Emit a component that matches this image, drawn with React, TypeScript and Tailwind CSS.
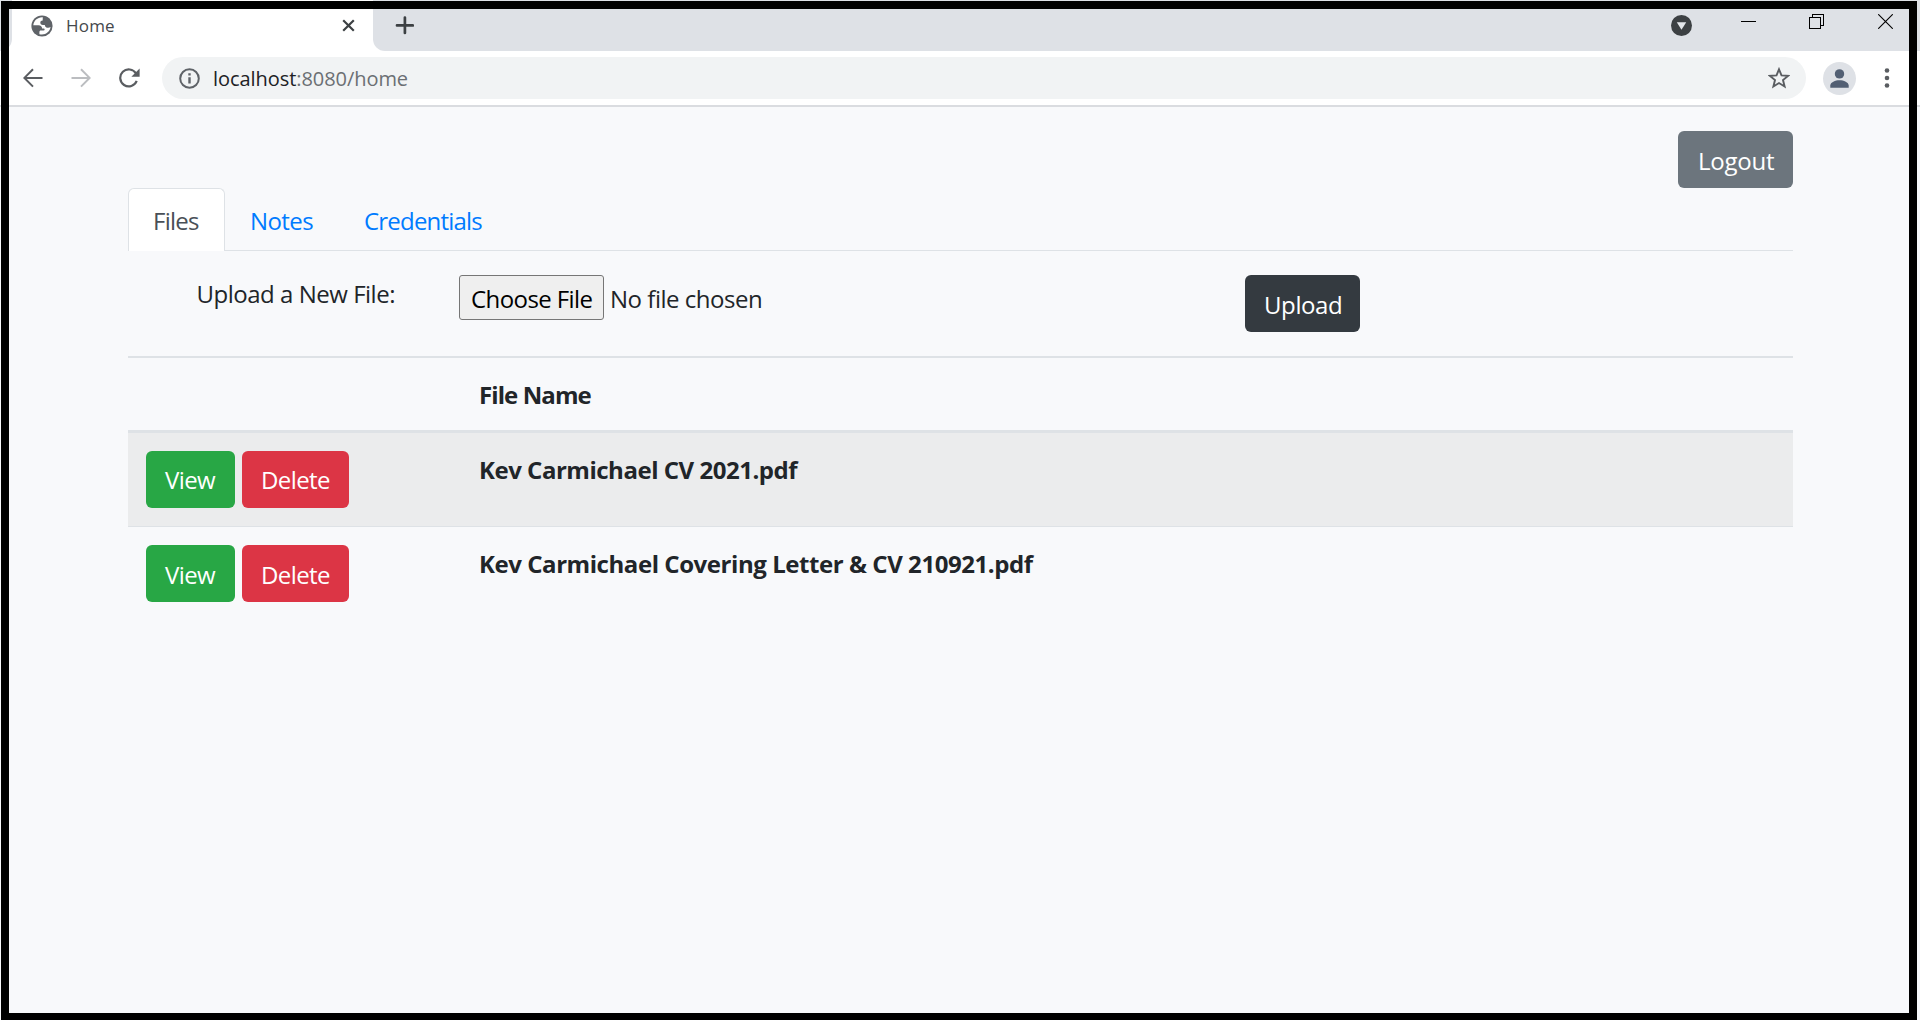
const files = [
  { name: "Kev Carmichael CV 2021.pdf", spacing: "tracking-[-0.48px]", row: "h-[94px] border-b border-[#dee2e6] bg-[#ebeced] pt-[18px]", label: "pt-px" },
  { name: "Kev Carmichael Covering Letter & CV 210921.pdf", spacing: "tracking-[-0.44px]", row: "h-[93px] pt-[18px]", label: "pt-[3px]" },
];

function TabStrip() {
  return (
    <div className="flex h-[51px] bg-[#dee1e6]">
      <div className="flex w-3 bg-white">
        <div className="w-full rounded-br-[12px] bg-[#dee1e6]" />
      </div>
      <div className="flex w-[361px] bg-white pt-[15px]">
        <svg className="ml-[19px] h-[22px] w-[22px]" viewBox="0 0 22 22">
          <circle cx="11" cy="11" r="10.6" fill="#5f6368" />
          <path d="M11.800 2.300C6.800 1.900 2.700 5.700 2.300 10.300h5.200c2.300 0 3.600 1.300 3.600 3.200h1.600c1.300 0 1.300 2-.1 2.100H9.800c-.900 0-1.400.700-1.400 1.400v2.200c5.500 1.500 10.400-2 11.200-7.100-.700.500-1.500.700-2.500.700-1.900 0-3.200-1.200-3.300-2.900h-1.900c-1.700 0-2.600-1-2.600-2.200 0-1.300 1-2.200 2.400-2.200z" fill="#fff" />
        </svg>
        <span className="ml-[13px] -mt-[3px] w-[265px] text-[17px] leading-[28px] tracking-[0.2px] text-[#45484c]">Home</span>
        <svg className="mt-[4px] ml-[11px] -mr-2 h-[13px] w-[13px] shrink-0" viewBox="0 0 13 13">
          <path d="M1.200 1.200l10.600 10.600M11.800 1.200L1.200 11.800" stroke="#3c4043" strokeWidth="2.200" fill="none" />
        </svg>
      </div>
      <div className="flex flex-1 bg-white">
        <div className="flex flex-1 rounded-bl-[12px] bg-[#dee1e6]">
          <svg className="ml-[22px] mt-[16px] h-[19px] w-[19px]" viewBox="0 0 19 19">
            <path d="M9.900 1.500v15.500M2 9.400h15.800" stroke="#3c4043" strokeWidth="2.700" strokeLinecap="round" />
          </svg>
          <div className="flex-1" />
          <svg className="mt-[15px] h-[21px] w-[21px]" viewBox="0 0 21 21">
            <circle cx="10.500" cy="10.500" r="10.500" fill="#3c4043" />
            <path d="M5.800 7.200h9.400l-4.700 7.600z" fill="#e3e6ea" />
          </svg>
          <div className="ml-[49px] mt-[21px] h-px w-[15px] bg-black" />
          <svg className="ml-[53px] mt-[14px] h-[15px] w-[15px]" viewBox="0 0 15 15" shapeRendering="crispEdges">
            <path d="M.5 3.500h11v11H.5zM3.500 3.500v-3h11v11h-3" stroke="#000" fill="none" />
          </svg>
          <svg className="ml-[54px] mr-[27px] mt-[14px] h-[15px] w-[15px]" viewBox="0 0 15 15">
            <path d="M.200.200l14.600 14.600M14.800.200L.200 14.800" stroke="#000" strokeWidth="1.100" />
          </svg>
        </div>
      </div>
    </div>
  );
}

function Toolbar() {
  return (
    <div className="flex h-[56px] items-start border-b-2 border-[#dadce0] bg-white pt-[6px]">
      <svg className="ml-[23px] mt-[11px] h-[20px] w-[20px]" viewBox="0 0 20 20">
        <path d="M19.500 9.900H1.700M10 1.200L1.400 9.900l8.600 8.700" stroke="#5a5d61" strokeWidth="2" fill="none" />
      </svg>
      <svg className="ml-[28px] mt-[11px] h-[20px] w-[20px]" viewBox="0 0 20 20">
        <path d="M.500 9.900h17.800M10 1.200l8.600 8.700-8.600 8.700" stroke="#bbbdc0" strokeWidth="2" fill="none" />
      </svg>
      <svg className="ml-[28px] mt-[11px] h-[20px] w-[21px]" viewBox="0 0 21 20">
        <path d="M17.700 12.900a8.500 8.500 0 1 1-.700-7.400" stroke="#5a5d61" strokeWidth="2.200" fill="none" />
        <path d="M20.600.600v8.200h-8.200z" fill="#5a5d61" />
      </svg>
      <div className="ml-[22px] flex h-[42px] w-[1644px] rounded-full bg-[#f1f3f4]">
        <svg className="ml-[17px] mt-[11px] h-[21px] w-[21px]" viewBox="0 0 21 21">
          <circle cx="10.500" cy="10.500" r="9.300" stroke="#5f6368" strokeWidth="2" fill="none" />
          <path d="M9.300 5.300h2.400v2.200H9.300zM9.300 9.200h2.400v6.300H9.300z" fill="#5f6368" />
        </svg>
        <div className="ml-[13px] mt-[7px] text-[20px] leading-[30px] tracking-[-0.06px] text-[#6b6f73]">
          <span className="text-[#202124]">localhost</span>:8080/home
        </div>
        <svg className="ml-auto mr-[16px] mt-[10px] h-[22px] w-[22px]" viewBox="0 0 22 22">
          <path d="M11 2.300l2.500 6.100 6.500.500-5 4.200 1.600 6.400-5.600-3.500-5.600 3.500L7 13.100 2 8.900l6.500-.500z" stroke="#5a5d61" strokeWidth="1.900" fill="none" />
        </svg>
      </div>
      <svg className="ml-[17px] mt-[5px] h-[33px] w-[33px]" viewBox="0 0 33 33">
        <circle cx="16.500" cy="16.500" r="16.500" fill="#dee1e6" />
        <circle cx="16.500" cy="11.900" r="4.700" fill="#525f73" />
        <path d="M7.300 25.800v-2.200c0-3.300 5-5.300 9.200-5.300s9.200 2 9.200 5.300v2.200z" fill="#525f73" />
      </svg>
      <svg className="ml-[28px] mt-[11px] h-[21px] w-[6px]" viewBox="0 0 6 21">
        <circle cx="3" cy="2.500" r="2.300" fill="#5a5d61" />
        <circle cx="3" cy="10" r="2.300" fill="#5a5d61" />
        <circle cx="3" cy="17.500" r="2.300" fill="#5a5d61" />
      </svg>
    </div>
  );
}

export default function App() {
  return (
    <div className="relative h-[1020px] w-[1920px] overflow-hidden whitespace-nowrap bg-[#f8f9fb] font-['Open_Sans',sans-serif] text-[24px] leading-[36px] text-[#212529]">
      <TabStrip />
      <Toolbar />
      <main className="ml-[128px] w-[1665px] pt-[24px]">
        <div className="flex justify-end">
          <button className="h-[57px] w-[115px] rounded-[6px] bg-[#6c757d] pl-[20px] pt-[3px] text-left tracking-[-0.24px] text-white">Logout</button>
        </div>
        <nav className="flex h-[63px] border-b border-[#dee2e6] text-[#007bff]">
          <a className="h-[63px] w-[97px] rounded-t-[6px] border border-b-0 border-[#dee2e6] bg-white pl-[24px] pt-[14px] tracking-[-0.75px] text-[#495057]">Files</a>
          <a className="w-[114px] pl-[25px] pt-[15px] tracking-[-0.6px]">Notes</a>
          <a className="pl-[25px] pt-[15px] tracking-[-0.8px]">Credentials</a>
        </nav>
        <form className="flex h-[105px] pt-[24px]">
          <label className="w-[331px] pl-[68.5px] pt-px tracking-[-0.48px]">Upload a New File:</label>
          <div className="flex w-[786px]">
            <button type="button" className="h-[45px] w-[145px] rounded-[3px] border border-[#767676] bg-[#efefef] pl-[11px] text-left tracking-[-0.58px] text-black">
              <span className="block pt-[2px]">Choose File</span>
            </button>
            <span className="pl-[6px] pt-[6px] tracking-[-0.48px]">No file chosen</span>
          </div>
          <button type="button" className="h-[57px] w-[115px] rounded-[6px] bg-[#343a40] pl-[19px] pt-[3px] text-left tracking-[-0.4px] text-white">Upload</button>
        </form>
        <section>
          <div className="h-[77px] border-b-[3px] border-t-2 border-[#dee2e6] pl-[351px] pt-[19px] font-bold tracking-[-0.9px]">File Name</div>
          {files.map((file) => (
            <div key={file.name} className={"flex " + file.row}>
              <div className="flex w-[351px] gap-[7px] pl-[18px] text-white">
                <button className={"h-[57px] w-[89px] rounded-[6px] bg-[#28a745] pl-[19px] text-left tracking-[-0.6px] " + file.label}>View</button>
                <button className={"h-[57px] w-[107px] rounded-[6px] bg-[#dc3545] pl-[19px] text-left tracking-[-0.6px] " + file.label}>Delete</button>
              </div>
              <span className={"pt-px font-bold " + file.spacing}>{file.name}</span>
            </div>
          ))}
        </section>
      </main>
      <div className="pointer-events-none absolute bottom-0 left-px right-[3px] top-px border-8 border-b-[7px] border-black" />
    </div>
  );
}
